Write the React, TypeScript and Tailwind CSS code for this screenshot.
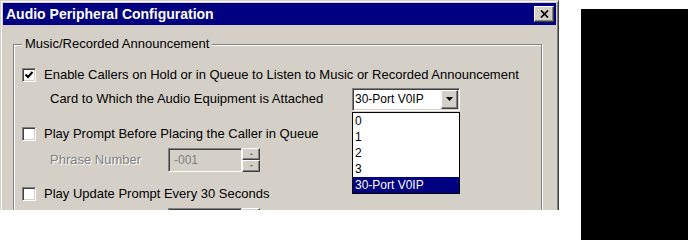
import React from "react";

const raised =
  "border border-t-white border-l-white border-r-[#404040] border-b-[#404040] shadow-[inset_-1px_-1px_0_#808080]";
const sunken =
  "border border-t-[#808080] border-l-[#808080] border-r-white border-b-white shadow-[inset_1px_1px_0_#404040,inset_-1px_-1px_0_#d4d0c8]";

function Checkbox({ checked }: { checked?: boolean }) {
  return (
    <div className={`w-[14px] h-[14px] bg-white shrink-0 p-[1px] flex items-center justify-center ${sunken}`}>
      {checked && (
        <svg width="10" height="10" viewBox="0 0 10 10">
          <path d="M1.5 4.5 L4 7 L8.5 2" fill="none" stroke="#000" strokeWidth="2" />
        </svg>
      )}
    </div>
  );
}

function Spinner() {
  return (
    <div className="w-[18px] h-[24px] flex flex-col shrink-0">
      <div className={`flex-1 bg-[#d4d0c8] flex items-center justify-center ${raised}`}>
        <svg width="5" height="4" viewBox="0 0 5 4">
          <path d="M2.5 1 L4.5 3 L0.5 3 Z" fill="#808080" />
        </svg>
      </div>
      <div className={`flex-1 bg-[#d4d0c8] flex items-center justify-center ${raised}`}>
        <svg width="5" height="4" viewBox="0 0 5 4">
          <path d="M0.5 1 L4.5 1 L2.5 3 Z" fill="#808080" />
        </svg>
      </div>
    </div>
  );
}

export default function App() {
  const items = ["0", "1", "2", "3", "30-Port V0IP"];
  return (
    <div className="flex items-start w-[688px] h-[240px] bg-white font-['Liberation_Sans',Arial,sans-serif] text-black">
      <div className="w-[559px] h-[210px] overflow-hidden shrink-0">
        <div className="h-[260px] bg-[#d4d0c8] border border-t-[#d4d0c8] border-l-[#d4d0c8] border-r-[#404040] border-b-[#404040] shadow-[inset_1px_1px_0_#fff,inset_-1px_-1px_0_#808080] p-[2px]">
          {/* title bar */}
          <div className="h-[22px] bg-[#000080] flex items-center justify-between pl-[3px] pr-[2px]">
            <span className="text-white font-bold text-[14px] leading-none">Audio Peripheral Configuration</span>
            <div className={`w-[20px] h-[16px] bg-[#d4d0c8] flex items-center justify-center ${raised}`}>
              <svg width="9" height="8" viewBox="0 0 9 8">
                <path d="M1 0.5 L8 7.5 M8 0.5 L1 7.5" stroke="#000" strokeWidth="1.7" fill="none" />
              </svg>
            </div>
          </div>
          {/* body */}
          <div className="pt-[19px] pl-[10px]">
            <div className="relative w-[529px] h-[220px] border border-[#808080] shadow-[inset_1px_1px_0_#fff,1px_1px_0_#fff] pt-[18px] pl-[8px]">
              <div className="absolute left-[8px] top-[-9px] px-[3px] bg-[#d4d0c8] text-[13px] leading-[16px]">
                Music/Recorded Announcement
              </div>
              {/* row 1 */}
              <div className="flex items-center h-[24px]">
                <Checkbox checked />
                <span className="ml-[8px] text-[13px] leading-[16px]">
                  Enable Callers on Hold or in Queue to Listen to Music or Recorded Announcement
                </span>
              </div>
              {/* row 2 */}
              <div className="flex items-center h-[24px] pl-[28px]">
                <span className="w-[302px] text-[13px] leading-[16px]">
                  Card to Which the Audio Equipment is Attached
                </span>
                <div className="relative z-10">
                  <div className={`w-[108px] h-[23px] bg-white p-[1px] flex items-center ${sunken}`}>
                    <span className="flex-1 pl-[1px] text-[12px] leading-[16px]">30-Port V0IP</span>
                    <div className={`w-[17px] h-[19px] bg-[#d4d0c8] flex items-center justify-center ${raised}`}>
                      <svg width="7" height="4" viewBox="0 0 7 4">
                        <path d="M0 0 L7 0 L3.5 4 Z" fill="#000" />
                      </svg>
                    </div>
                  </div>
                  <div className="absolute left-0 top-[24px] w-[108px] border border-black bg-white">
                    {items.map((it, i) => (
                      <div
                        key={it}
                        className={`h-[16px] pl-[2px] text-[12px] leading-[16px] ${
                          i === items.length - 1 ? "bg-[#000080] text-white" : ""
                        }`}
                      >
                        {it}
                      </div>
                    ))}
                  </div>
                </div>
              </div>
              {/* row 3 */}
              <div className="flex items-center h-[24px] mt-[11px]">
                <Checkbox />
                <span className="ml-[8px] text-[13px] leading-[16px]">
                  Play Prompt Before Placing the Caller in Queue
                </span>
              </div>
              {/* row 4 */}
              <div className="flex items-center h-[24px] mt-[2px] pl-[28px]">
                <span className="w-[118px] text-[13px] leading-[16px] text-[#808080] [text-shadow:1px_1px_0_#fff]">
                  Phrase Number
                </span>
                <div className={`w-[74px] h-[24px] bg-[#d4d0c8] flex items-center pl-[5px] ${sunken}`}>
                  <span className="text-[12px] leading-[16px] text-[#808080]">-001</span>
                </div>
                <Spinner />
              </div>
              {/* row 5 */}
              <div className="flex items-center h-[24px] mt-[10px]">
                <Checkbox />
                <span className="ml-[8px] text-[13px] leading-[16px]">
                  Play Update Prompt Every 30 Seconds
                </span>
              </div>
              {/* row 6 (mostly hidden below the crop) */}
              <div className="flex items-start h-[24px] mt-[2px] pl-[28px]">
                <div className="w-[118px]" />
                <div className={`w-[74px] h-[24px] bg-[#d4d0c8] ${sunken}`} />
                <Spinner />
              </div>
            </div>
          </div>
        </div>
      </div>
      <div className="w-[107px] h-[231px] mt-[9px] ml-[22px] bg-black shrink-0" />
    </div>
  );
}
